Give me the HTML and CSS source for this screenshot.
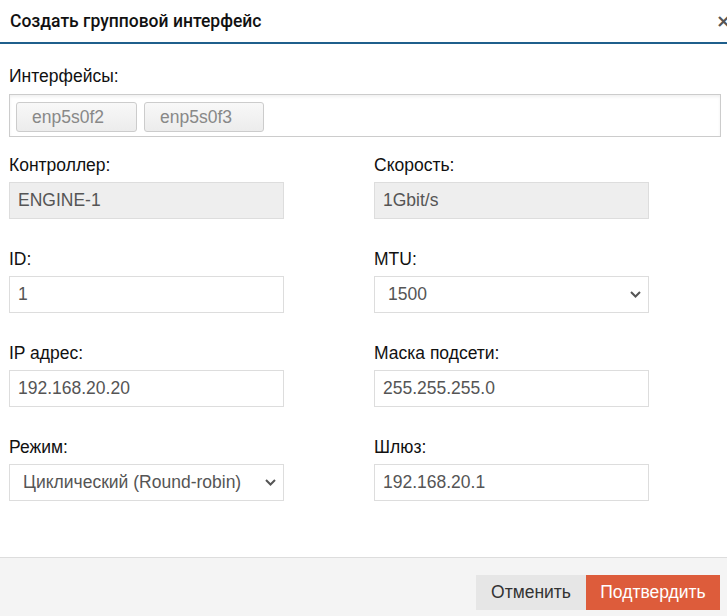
FILE: index.html
```html
<!DOCTYPE html>
<html lang="ru">
<head>
<meta charset="utf-8">
<title>Создать групповой интерфейс</title>
<link rel="stylesheet" href="styles.css">
</head>
<body>
<div class="modal">
  <div class="modal-header">
    <span class="modal-title">Создать групповой интерфейс</span>
    <span class="modal-close">×</span>
  </div>
  <div class="modal-body">
    <div class="label">Интерфейсы:</div>
    <div class="tag-box">
      <span class="tag tag-a">enp5s0f2</span>
      <span class="tag tag-b">enp5s0f3</span>
    </div>
    <div class="grid">
      <div class="group">
        <div class="label">Контроллер:</div>
        <div class="field readonly">ENGINE-1</div>
      </div>
      <div class="group">
        <div class="label">Скорость:</div>
        <div class="field readonly">1Gbit/s</div>
      </div>
      <div class="group">
        <div class="label">ID:</div>
        <div class="field">1</div>
      </div>
      <div class="group">
        <div class="label">MTU:</div>
        <div class="field select"><span>1500</span>
          <svg class="chev" width="11" height="7" viewBox="0 0 11 7"><path d="M1 1 L5.5 5.5 L10 1" fill="none" stroke="#555" stroke-width="2"/></svg>
        </div>
      </div>
      <div class="group">
        <div class="label">IP адрес:</div>
        <div class="field">192.168.20.20</div>
      </div>
      <div class="group">
        <div class="label">Маска подсети:</div>
        <div class="field">255.255.255.0</div>
      </div>
      <div class="group">
        <div class="label">Режим:</div>
        <div class="field select"><span>Циклический (Round-robin)</span>
          <svg class="chev" width="11" height="7" viewBox="0 0 11 7"><path d="M1 1 L5.5 5.5 L10 1" fill="none" stroke="#555" stroke-width="2"/></svg>
        </div>
      </div>
      <div class="group">
        <div class="label">Шлюз:</div>
        <div class="field">192.168.20.1</div>
      </div>
    </div>
  </div>
  <div class="modal-footer">
    <button class="btn btn-cancel">Отменить</button>
    <button class="btn btn-confirm">Подтвердить</button>
  </div>
</div>
</body>
</html>
```
FILE: styles.css
```css
* { box-sizing: border-box; }
html, body { margin: 0; padding: 0; }
body {
  font-family: "Liberation Sans", Arial, sans-serif;
  font-size: 17.5px;
  color: #222;
  background: #fff;
  overflow: hidden;
}
.modal {
  width: 727px;
  height: 616px;
  display: flex;
  flex-direction: column;
  overflow: hidden;
}
.modal-header {
  height: 44px;
  flex: none;
  border-bottom: 2px solid #1f5f8c;
  display: flex;
  align-items: center;
  justify-content: space-between;
  padding-left: 10px;
}
.modal-title {
  font-family: Roboto, "Liberation Sans", sans-serif;
  font-weight: 500;
  font-size: 17.5px;
  color: #111;
}
.modal-close {
  font-family: "DejaVu Sans", sans-serif;
  font-weight: bold;
  font-size: 18px;
  color: #555;
  margin-right: -4px;
  line-height: 1;
}
.modal-body {
  flex: 1;
  padding: 22px 6px 0 9px;
}
.label {
  line-height: 20px;
  color: #111;
}
.tag-box {
  margin-top: 8px;
  height: 43px;
  border: 1px solid #ccc;
  box-shadow: inset 0 2px 3px rgba(0,0,0,0.06);
  padding: 7px 6px 4px;
  display: flex;
  gap: 7px;
}
.tag {
  height: 30px;
  border: 1px solid #ccc;
  border-radius: 3px;
  background: linear-gradient(#f8f8f8, #ececec);
  color: #888;
  display: flex;
  align-items: center;
  padding-left: 15px;
}
.tag-a { width: 121px; }
.tag-b { width: 120px; }
.grid {
  margin-top: 18px;
  display: grid;
  grid-template-columns: 275px 275px;
  column-gap: 90px;
  row-gap: 30px;
}
.group .label { margin-bottom: 7px; }
.field {
  height: 37px;
  border: 1px solid #ddd;
  background: #fff;
  color: #555;
  padding: 0 8px;
  display: flex;
  align-items: center;
}
.field.readonly { background: #eee; }
.field.select {
  padding: 0 7px 0 13px;
  justify-content: space-between;
}
.chev { flex: none; }
.modal-footer {
  flex: none;
  height: 59px;
  border-top: 1px solid #ddd;
  background: #f4f4f4;
  display: flex;
  justify-content: flex-end;
  align-items: flex-start;
  padding: 17px 7px 0 0;
}
.btn {
  font-family: "Liberation Sans", Arial, sans-serif;
  font-size: 17.5px;
  height: 35px;
  border: none;
  margin: 0;
  padding: 0;
  cursor: pointer;
}
.btn-cancel {
  width: 110px;
  background: #e6e6e6;
  color: #333;
}
.btn-confirm {
  width: 134px;
  background: #dd5c3b;
  color: #fff;
}
```
